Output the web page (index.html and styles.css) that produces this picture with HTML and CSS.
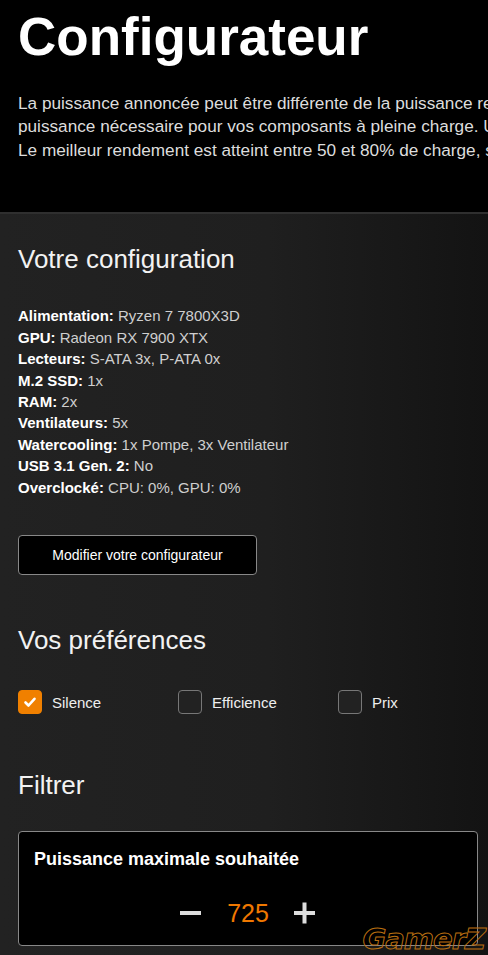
FILE: index.html
```html
<!DOCTYPE html>
<html lang="fr">
<head>
    <meta charset="UTF-8">
    <meta name="viewport" content="width=device-width, initial-scale=1.0">
    <title>Configurateur</title>
    <link rel="stylesheet" href="styles.css">
</head>
<body>
    <header class="intro">
        <h1>Configurateur</h1>
        <p class="intro-text">
            <span>La puissance annoncée peut être différente de la puissance recommandée pour votre système.</span>
            <span>puissance nécessaire pour vos composants à pleine charge. Une marge de sécurité est incluse.</span>
            <span>Le meilleur rendement est atteint entre 50 et 80% de charge, selon le modèle choisi.</span>
        </p>
    </header>

    <main class="content">
        <!-- Configuration actuelle -->
        <h2>Votre configuration</h2>
        <ul class="specs">
            <li><strong>Alimentation:</strong> Ryzen 7 7800X3D</li>
            <li><strong>GPU:</strong> Radeon RX 7900 XTX</li>
            <li><strong>Lecteurs:</strong> S-ATA 3x, P-ATA 0x</li>
            <li><strong>M.2 SSD:</strong> 1x</li>
            <li><strong>RAM:</strong> 2x</li>
            <li><strong>Ventilateurs:</strong> 5x</li>
            <li><strong>Watercooling:</strong> 1x Pompe, 3x Ventilateur</li>
            <li><strong>USB 3.1 Gen. 2:</strong> No</li>
            <li><strong>Overclocké:</strong> CPU: 0%, GPU: 0%</li>
        </ul>
        <button class="btn-edit">Modifier votre configurateur</button>

        <!-- Préférences -->
        <h2>Vos préférences</h2>
        <div class="prefs">
            <label class="pref">
                <span class="box checked">
                    <svg width="14" height="14" viewBox="0 0 14 14"><path d="M2.5 7.5 L5.5 10.5 L11.5 3.8" fill="none" stroke="#fff" stroke-width="2.6" stroke-linecap="round" stroke-linejoin="round"/></svg>
                </span>
                Silence
            </label>
            <label class="pref"><span class="box"></span>Efficience</label>
            <label class="pref"><span class="box"></span>Prix</label>
        </div>

        <!-- Filtre -->
        <h2>Filtrer</h2>
        <div class="filter">
            <div class="filter-title">Puissance maximale souhaitée</div>
            <div class="stepper">
                <button class="step" aria-label="moins">
                    <svg width="22" height="22" viewBox="0 0 22 22"><rect x="0" y="9" width="21" height="4" fill="#ddd"/></svg>
                </button>
                <span class="value">725</span>
                <button class="step" aria-label="plus">
                    <svg width="22" height="22" viewBox="0 0 22 22"><rect x="0" y="9" width="21" height="4" fill="#ddd"/><rect x="8.5" y="0.5" width="4" height="21" fill="#ddd"/></svg>
                </button>
            </div>
        </div>
    </main>

    <div class="watermark">GamerZ</div>
</body>
</html>
```

FILE: styles.css
```css
html {
    background: #1a1a1a;
}
body {
    font-family: "Liberation Sans", Arial, sans-serif;
    margin: 0;
    min-height: 955px;
    overflow: hidden;
    position: relative;
    color: #fff;
    background: linear-gradient(to right, #222 0%, #1f1f1f 55%, #131313 100%);
}
.intro {
    background: #000;
    padding: 5px 0 50px 18px;
    overflow: hidden;
    border-bottom: 2px solid #2f2f2f;
}
h1 {
    margin: 0;
    font-size: 53px;
    line-height: 1.2;
    font-weight: bold;
    color: #fff;
}
.intro-text {
    margin: 23px 0 0;
    font-size: 17.2px;
    line-height: 23.5px;
    color: #ddd;
    white-space: nowrap;
}
.intro-text span {
    display: block;
}
.content {
    padding: 30px 10px 0 18px;
}
h2 {
    margin: 0;
    font-size: 26px;
    line-height: 1.2;
    font-weight: normal;
    color: #f2f2f2;
}
.specs {
    list-style: none;
    margin: 30px 0 0;
    padding: 0;
    font-size: 15px;
    line-height: 21.4px;
    color: #cfcfcf;
}
.specs strong {
    color: #fff;
}
.btn-edit {
    display: block;
    margin: 37px 0 50px;
    width: 239px;
    height: 40px;
    background: #000;
    color: #fff;
    border: 1px solid #888;
    border-radius: 4px;
    font-family: inherit;
    font-size: 14px;
    cursor: pointer;
}
.prefs {
    display: flex;
    margin: 34px 0 56px;
}
.pref {
    flex: 0 0 160px;
    display: flex;
    align-items: center;
    gap: 10px;
    font-size: 15px;
    color: #eee;
}
.box {
    width: 22px;
    height: 22px;
    border: 1px solid #777;
    border-radius: 4px;
    background: #222;
    display: flex;
    align-items: center;
    justify-content: center;
}
.box.checked {
    background: #f08000;
    border-color: #f08000;
}
.filter {
    margin-top: 30px;
    width: 460px;
    background: #000;
    border: 1px solid #888;
    border-radius: 4px;
    padding: 16px 0 12px 15px;
    box-sizing: border-box;
}
.filter-title {
    font-size: 18px;
    line-height: 22px;
    font-weight: bold;
    color: #fff;
}
.stepper {
    display: flex;
    align-items: center;
    justify-content: center;
    gap: 25px;
    height: 40px;
    margin-top: 23px;
    padding-right: 15px;
}
.step {
    background: none;
    border: none;
    padding: 0;
    width: 22px;
    height: 22px;
    cursor: pointer;
}
.value {
    font-size: 25px;
    color: #f07800;
}
.watermark {
    position: absolute;
    right: 3px;
    bottom: -1px;
    font-family: "DejaVu Sans", sans-serif;
    font-size: 29px;
    font-weight: bold;
    font-style: italic;
    letter-spacing: -1px;
    color: transparent;
    -webkit-text-stroke: 1px #b86e10;
}
```
